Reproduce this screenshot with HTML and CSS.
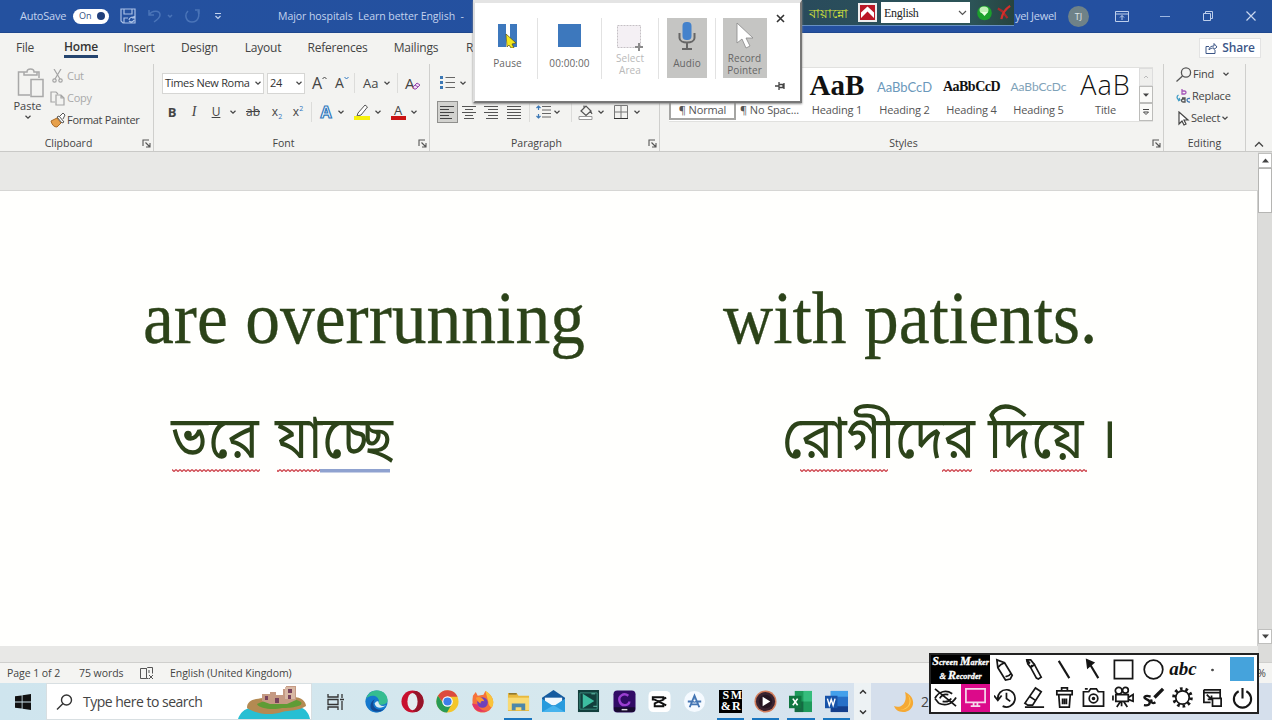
FILE: index.html
```html
<!DOCTYPE html>
<html lang="en">
<head>
<meta charset="utf-8">
<title>Major hospitals Learn better English - Word</title>
<link rel="stylesheet" href="styles.css">
</head>
<body>
<svg class="defs" width="0" height="0">
  <defs>
    <symbol id="chev" viewBox="0 0 8 8"><path d="M1.5 2.8 4 5.2 6.500 2.800" fill="none" stroke="#444" stroke-width="1.200"/></symbol>
    <symbol id="launch" viewBox="0 0 9 9"><path d="M1 7V1h6M3.500 3.500 7.500 7.500M8 4v4H4" fill="none" stroke="#555" stroke-width="1.100"/></symbol>
    <pattern id="zig" width="4" height="3" patternUnits="userSpaceOnUse"><path d="M0 .5 2 2.500 4 .5" fill="none" stroke="#cf4a52" stroke-width="1.300"/></pattern>
  </defs>
</svg>
<div class="app">
  <header class="titlebar">
    <span class="autosave">AutoSave</span>
    <span class="toggle"><span>On</span><i></i></span>
    <svg class="qa save" width="16" height="16" viewBox="0 0 16 16" fill="none" stroke="#a9c0e6" stroke-width="1.200"><path d="M1 1h14v14H3L1 13zM4 1v5h8V1M4 15v-5h4M9 12a3 3 0 0 1 5-2M14 8v2h-2M14 12a3 3 0 0 1-5 1"/></svg>
    <svg class="qa undo" width="26" height="16" viewBox="0 0 26 16" fill="none" stroke="#4a74b8" stroke-width="1.500"><path d="M1 2v5h5M1 7c3-5 11-5 11 0 0 3-3 5-6 7M20 7l2 2 2-2"/></svg>
    <svg class="qa redo" width="16" height="16" viewBox="0 0 16 16" fill="none" stroke="#4a74b8" stroke-width="1.500"><path d="M11 2h4v4M14 3c2 5 0 11-6 11S0 7 4 3"/></svg>
    <svg class="qa more" width="8" height="8" viewBox="0 0 8 8" fill="none" stroke="#c3d3ee" stroke-width="1.200"><path d="M1 1.500h6M1.500 4 4 6.500 6.500 4"/></svg>
    <span class="doc-name">Major hospitals&nbsp; Learn better English&nbsp; -</span>
    <span class="user">yel Jewel</span>
    <span class="avatar">TJ</span>
    <svg class="win w1" width="14" height="11" viewBox="0 0 14 11" fill="none" stroke="#bdceeb"><path d="M.5.5h13v10H.5zM.5 3h13M7 9V4.500M5 6.500l2-2 2 2"/></svg>
    <svg class="win w2" width="10" height="10" viewBox="0 0 10 10" stroke="#9db6e0"><path d="M0 5.500h10"/></svg>
    <svg class="win w3" width="10" height="10" viewBox="0 0 10 10" fill="none" stroke="#bdceeb"><path d="M.5 2.500h7v7h-7zM2.500 2.500v-2h7v7h-2"/></svg>
    <svg class="win w4" width="10" height="10" viewBox="0 0 10 10" stroke="#c9d7ef" stroke-width="1.200"><path d="m.5.5 9 9m0-9-9 9"/></svg>
  </header>

  <nav class="tabs">
    <span>File</span><span class="active">Home</span><span>Insert</span><span>Design</span><span>Layout</span><span>References</span><span>Mailings</span><span>Review</span>
    <span class="share"><svg width="13" height="12" viewBox="0 0 13 12" fill="none" stroke="#3c5687"><path d="M4 4.500H1v7h9V8M4 8c0-3 2-4 5-4V1.500L12 5 9 7.500V6C7 6 5 6.500 4 8z"/></svg>Share</span>
  </nav>

  <section class="ribbon">
    <div class="group clipboard">
      <div class="body">
        <div class="paste">
          <svg width="28" height="30" viewBox="0 0 28 30" fill="none" stroke="#a8a8a8" stroke-width="1.500"><path d="M7 4H1.500v23H13M19 4h3v6M7 7V4h3c0-4 7-4 7 0h3v3zM14 11.500h12v17H14z"/></svg>
          <span>Paste</span>
          <svg width="8" height="8"><use href="#chev"/></svg>
        </div>
        <div class="clip-list">
          <div class="dim"><svg width="16" height="14" viewBox="0 0 16 14" fill="none" stroke="#a5a5a5" stroke-width="1.200"><path d="m4 0 6 10M11 0 5 10"/><circle cx="4.500" cy="11.500" r="1.700"/><circle cx="10.500" cy="11.500" r="1.700"/></svg>Cut</div>
          <div class="dim"><svg width="16" height="15" viewBox="0 0 16 15" fill="none" stroke="#a5a5a5" stroke-width="1.200"><path d="M5 11H1V1h5l2 2M6 4h5l3 3v7H6zM11 4v3h3"/></svg>Copy</div>
          <div><svg width="16" height="15" viewBox="0 0 16 15"><path d="M1 8 7 5l4 5-4 4c-3 0-5-2-6-6z" fill="#e7a04a" stroke="#a96b28"/><path d="m7 4 2-1 5 6-2 1zM10 3l3-3 2 2-2 4" fill="#fff" stroke="#555"/></svg>Format Painter</div>
        </div>
      </div>
      <div class="caption"><span>Clipboard</span><svg width="9" height="9"><use href="#launch"/></svg></div>
    </div>

    <div class="group font">
      <div class="frow1">
        <span class="combo">Times New Roma<svg width="8" height="8"><use href="#chev"/></svg></span>
        <span class="combo">24<svg width="8" height="8"><use href="#chev"/></svg></span>
        <span class="grow">A<svg width="5" height="4" viewBox="0 0 5 4" fill="none" stroke="#444"><path d="M.5 3 2.500 1l2 2"/></svg></span>
        <span class="grow small">A<svg width="5" height="4" viewBox="0 0 5 4" fill="none" stroke="#2f76c0"><path d="M.5 1l2 2 2-2"/></svg></span>
        <i class="sep"></i>
        <span class="aa">Aa<svg width="8" height="8"><use href="#chev"/></svg></span>
        <i class="sep"></i>
        <span class="clear">A<svg width="9" height="8" viewBox="0 0 9 8" fill="#f1def5" stroke="#9647ad"><path d="m1 5 4-4 3 2-4 4H2zM3 3l3 2"/></svg></span>
      </div>
      <div class="frow2">
        <b>B</b><em>I</em><u>U</u><svg width="8" height="8"><use href="#chev"/></svg><s>ab</s><span>x<sub>2</sub></span><span>x<sup>2</sup></span><i class="sep"></i>
        <span class="fx">A</span><svg width="8" height="8"><use href="#chev"/></svg>
        <svg width="16" height="16" viewBox="0 0 16 16"><path d="m4 9 7-8 2.500 2L7 11l-4 1z" fill="#fff" stroke="#555"/><path d="M0 12h16v4H0z" fill="#f7f10d"/></svg><svg width="8" height="8"><use href="#chev"/></svg>
        <span class="color">A</span><svg width="8" height="8"><use href="#chev"/></svg>
      </div>
      <div class="caption"><span>Font</span><svg width="9" height="9"><use href="#launch"/></svg></div>
    </div>

    <div class="group para">
      <div class="prow1">
        <svg width="15" height="15" viewBox="0 0 15 15"><path d="M0 1h3v3H0zM0 6h3v3H0zM0 11h3v3H0z" fill="#3c78b5"/><path d="M5.500 2.500H15M5.500 7.500H15M5.500 12.500H15" stroke="#666" stroke-width="1.200"/></svg>
        <svg width="8" height="8"><use href="#chev"/></svg>
      </div>
      <div class="prow2">
        <span class="pressed"><svg width="14" height="13" viewBox="0 0 14 13" stroke="#444"><path d="M0 .5h14M0 3.500h9M0 6.500h14M0 9.500h9M0 12.500h12"/></svg></span>
        <svg width="14" height="13" viewBox="0 0 14 13" stroke="#555"><path d="M0 .5h14M3 3.500h8M0 6.500h14M3 9.500h8M2 12.500h10"/></svg>
        <svg width="14" height="13" viewBox="0 0 14 13" stroke="#555"><path d="M0 .5h14M4 3.500h10M0 6.500h14M4 9.500h10M2 12.500h12"/></svg>
        <svg width="14" height="13" viewBox="0 0 14 13" stroke="#555"><path d="M0 .5h14M0 3.500h14M0 6.500h14M0 9.500h14M0 12.500h14"/></svg>
        <i class="sep"></i>
        <svg width="15" height="14" viewBox="0 0 15 14" fill="none"><path d="M2.500 1v4M2.500 9v4M.5 3l2-2 2 2M.5 11l2 2 2-2" stroke="#3c78b5" stroke-width="1.200"/><path d="M6 1.500h9M6 5h9M6 8.500h9M6 12h9" stroke="#666"/></svg>
        <svg width="8" height="8"><use href="#chev"/></svg>
        <i class="sep"></i>
        <svg width="16" height="16" viewBox="0 0 16 16" fill="none" stroke="#555"><path d="m3 7 5-5 5 5-5 4.500zM6 4V1.500M12 6l2 4" stroke-width="1.200"/><path d="M1 12.500h13v3H1z" fill="#fff" stroke="#999"/></svg>
        <svg width="8" height="8"><use href="#chev"/></svg>
        <svg width="14" height="14" viewBox="0 0 14 14" fill="none" stroke="#777"><path d="M.5.5h13v13H.5zM7 .5v13M.5 7h13"/><path d="M0 13.500h14" stroke="#333"/></svg>
        <svg width="8" height="8"><use href="#chev"/></svg>
      </div>
      <div class="caption"><span>Paragraph</span><svg width="9" height="9"><use href="#launch"/></svg></div>
    </div>

    <div class="group styles">
      <div class="gallery">
        <div class="style chosen"><span class="sample"></span><span class="name">¶ Normal</span></div>
        <div class="style"><span class="sample"></span><span class="name">¶ No Spac...</span></div>
        <div class="style"><span class="sample h1">AaB</span><span class="name">Heading 1</span></div>
        <div class="style"><span class="sample h2">AaBbCcD</span><span class="name">Heading 2</span></div>
        <div class="style"><span class="sample h4">AaBbCcD</span><span class="name">Heading 4</span></div>
        <div class="style"><span class="sample h5">AaBbCcDc</span><span class="name">Heading 5</span></div>
        <div class="style"><span class="sample title">AaB</span><span class="name">Title</span></div>
        <div class="spin">
          <span class="off"><svg width="8" height="8" viewBox="0 0 8 8" fill="none" stroke="#bbb"><path d="m2 5 2-2 2 2"/></svg></span>
          <span><svg width="8" height="8" viewBox="0 0 8 8"><path d="M1 2.500h6L4 5.800z" fill="#444"/></svg></span>
          <span><svg width="8" height="8" viewBox="0 0 8 8" fill="none" stroke="#444"><path d="M1 1.500h6M1.500 4h5L4 6.500z"/></svg></span>
        </div>
      </div>
      <div class="caption"><span>Styles</span><svg width="9" height="9"><use href="#launch"/></svg></div>
    </div>

    <div class="group editing">
      <div class="edit-list">
        <div><svg width="16" height="15" viewBox="0 0 16 15" fill="none" stroke="#555" stroke-width="1.300"><circle cx="10" cy="5.500" r="4.600"/><path d="m6.500 9-6 5.500"/></svg>Find<svg class="c2" width="8" height="8"><use href="#chev"/></svg></div>
        <div><svg width="15" height="15" viewBox="0 0 15 15"><g fill="none" stroke-width="1.300"><path d="M6 0v5h2.500c2 0 2-3 0-3H6" stroke="#a656b8"/><path d="M2.500 6C.5 7 .5 10 3 11M2 12l2-1-1-2" stroke="#3c9ac4"/><path d="M9 10H7c-2 0-2 3 0 3h2V9H6" stroke="#555"/><path d="M14 9.500c-4-1-4 4 0 3.500" stroke="#3c78b5"/></g></svg>Replace</div>
        <div><svg width="14" height="15" viewBox="0 0 14 15" fill="#fff" stroke="#444" stroke-width="1.200"><path d="M3 1v12l3-3 2 4 2-1-2-4h4z"/></svg>Select<svg width="8" height="8"><use href="#chev"/></svg></div>
      </div>
      <div class="caption"><span>Editing</span></div>
    </div>
    <div class="collapse"><svg width="10" height="7" viewBox="0 0 10 7" fill="none" stroke="#444" stroke-width="1.300"><path d="m1 5.500 4-4 4 4"/></svg></div>
  </section>

  <main class="workspace">
    <div class="canvas">
      <article class="page">
        <div class="line en"><span>are overrunning</span><span>with patients.</span></div>
        <div class="line bn" lang="bn"><span class="b1">ভরে</span><span class="b2">যাচ্ছে</span><span class="b3">রোগীদের</span><span class="b4">দিয়ে ।</span></div>
        <svg class="marks" width="1257" height="4"><g fill="url(#zig)"><path d="M172 0h88v3h-88zM277 0h43v3h-43zM800 0h88v3h-88zM942 0h30v3h-30zM990 0h97v3h-97z"/></g><path d="M320 0h70v3.500h-70z" fill="#8fa2cf"/></svg>
      </article>
    </div>
    <div class="scrollbar">
      <span class="sb-btn"><svg width="7" height="5" viewBox="0 0 7 5"><path d="M0 4.500h7L3.500.5z" fill="#444"/></svg></span>
      <span class="thumb"></span>
      <span class="sb-btn down"><svg width="7" height="5" viewBox="0 0 7 5"><path d="M0 .5h7L3.500 4.500z" fill="#444"/></svg></span>
    </div>
  </main>

  <footer class="status">
    <span class="s1">Page 1 of 2</span><span class="s2">75 words</span>
    <svg width="14" height="13" viewBox="0 0 14 13" fill="none" stroke="#555"><path d="M6.500 1.500v10H.5v-10h6l1-1h5v6M6.500 11.500h2M9 8l4 4M13 8l-4 4M9 3v3"/></svg>
    <span class="s3">English (United Kingdom)</span>
    <span class="pct">%</span>
  </footer>

  <div class="taskbar">
    <div class="start"><svg width="16" height="16" viewBox="0 0 16 16" fill="#111"><path d="m0 2.300 6.700-.9v6.200H0zM7.500 1.300 16 0v7.600H7.500zM0 8.400h6.700v6.200L0 13.700zM7.500 8.400H16V16l-8.500-1.300z"/></svg></div>
    <div class="search">
      <svg width="17" height="16" viewBox="0 0 17 16" fill="none" stroke="#333" stroke-width="1.400"><circle cx="10.500" cy="6" r="5"/><path d="m7 9.500-6 6"/></svg>
      <span>Type here to search</span>
      <svg class="isle" width="74" height="34" viewBox="0 0 74 34"><path d="M1 34c2-6 6-10 14-12 16-4 36-3 48 0 6 2 9 7 10 12z" fill="#27bfd3"/><path d="M10 23c0-8 8-9 16-10l30-1c9 0 13 5 13 9-7 5-16 4-24 6-12 4-26 2-35-4z" fill="#b48a52"/><path d="M20 19c8-5 36-8 44-2 3 4-8 6-19 6-8 2-23 1-25-4z" fill="#5f9c35"/><path d="M25 9h8V7h6v3h7V4h3V1h10v14l-9 4H33l-8-3z" fill="#c59a83"/><path d="M48 2h10v12H48z" fill="#d8b8a4"/><path d="M51 4h4v4h-4zM28 11h3v4h-3zM38 13h4v5h-4zM51 10h3v4h-3z" fill="#78435c"/></svg>
    </div>
    <div class="view"><svg width="17" height="16" viewBox="0 0 17 16" fill="none" stroke="#333" stroke-width="1.300"><path d="M1 0v3h10V0M1 5.500h10v5H1zM1 16v-3h10v3M15 0v4M15 7v9M13 5.500h4"/></svg></div>
    <div class="apps">
      <span><svg viewBox="0 0 24 24"><circle cx="12" cy="12" r="11.500" fill="#1679c9"/><path d="M1 11C2 3 8 0 13 .5c7 0 11 6 10.500 11-1 4-6 5-10 3 3-4-1-8-5-7C5 7.500 2 9 1 11z" fill="#35bd90"/><path d="M1 10c3-6 14-5 13 2-2 2-1 5 2 6 3 0 5-1 6-1-2 5-8 7-12 6C3 21 0 15 1 10z" fill="#1579ce"/><path d="M10 10c-4 6 1 13 10 10-5 4-12 3-14-1-1-4 1-8 4-9z" fill="#124a94"/><path d="M10 14c1-1 2-3 4-2 0 4 4 6 8 4-5 4-11 3-12-2z" fill="#d9edf3"/></svg></span>
      <span><svg viewBox="0 0 24 24"><circle cx="12" cy="12" r="11.500" fill="#c8102e"/><path d="M16 1c10 4 10 18 0 22-4 0-6-5-6-11s2-11 6-11z" fill="#96152a"/><ellipse cx="12" cy="12" rx="5.300" ry="9" fill="#e4edf0"/></svg></span>
      <span><svg viewBox="0 0 24 24"><circle cx="12" cy="12" r="11.500" fill="#f4c62b"/><path d="M2 6a11.500 11.500 0 0 1 20.500 1H12L8 14z" fill="#dc4b3e"/><path d="M2 6a11.500 11.500 0 0 0 9.500 17.500l5-9H8z" fill="#279b55"/><circle cx="12" cy="12" r="5.500" fill="#fff"/><circle cx="12" cy="12" r="4.300" fill="#3d7ee8"/></svg></span>
      <span><svg viewBox="0 0 24 24"><path d="M2 6l3-4 2 4 6-1 2-4c5 3 9 8 8 13-2 13-20 12-21 1-1-4 0-7 0-9z" fill="#f5713b"/><path d="M15 1c8 4 10 12 7 17-2 0-4-2-4-6z" fill="#f9c33a"/><path d="M1 14c2 8 10 11 18 7-8 2-10-2-12-6z" fill="#e33668"/><circle cx="12" cy="13" r="5.500" fill="#7141ba"/><path d="M5 8c5-2 8 1 9 4-3-1-4 0-4 2-2-1-4-3-5-6z" fill="#fa9a31"/></svg></span>
      <span class="on"><svg viewBox="0 0 24 24"><path d="M1 3h9l2 3h11v16H1z" fill="#e8b93e"/><path d="M1 8h22v13H1z" fill="#f8da74"/><path d="M5 21v-7h14v7h-4v-3H9v3z" fill="#4c87aa"/><path d="M2 4h8" stroke="#85712e" stroke-width="1.500"/></svg></span>
      <span><svg viewBox="0 0 24 24"><path d="M0 8 12 0l12 8v15H0z" fill="#155b9f"/><path d="M3 8h18v8H3z" fill="#f1f8fd"/><path d="m0 9 12 8 12-8v14H0z" fill="#279bdd"/><path d="M0 23 12 16l12 7z" fill="#46b3ed"/></svg></span>
      <span><svg viewBox="0 0 24 24"><path d="M1 0h22v23H1z" fill="#123e3c"/><path d="M3 3h18v17H3z" fill="none" stroke="#3c8f80"/><path d="m6 4 12 7.500L6 19z" fill="#3dbda0"/><path d="M15 4h4M17 17h4" stroke="#65c8b2"/></svg></span>
      <span><svg viewBox="0 0 24 24"><rect x=".5" y=".5" width="23" height="23" rx="4" fill="#310b65"/><path d="M16 6c-5-4-11 1-9 6 2 6 10 4 10 0" fill="none" stroke="#9b3ed1" stroke-width="2.500"/><path d="M1 18h22v3q-1 2-3 2H4q-3 0-3-5z" fill="#180a30"/><path d="M9 20.500h6" stroke="#ddd" stroke-width="1.500"/></svg></span>
      <span><svg viewBox="0 0 24 24"><rect x=".5" y="1" width="23" height="22" rx="5" fill="#fff"/><path d="M5 7.500h11v2.500l-9 4v3h9v-2.500l-9-4.500H5zM15 10l4-2M15 14l4 2" fill="none" stroke="#111" stroke-width="2"/></svg></span>
      <span><svg viewBox="0 0 24 24"><circle cx="12" cy="12" r="11" fill="#f5faff"/><path d="m7 18 5-12 5 12M5 12h14M9 15h6" fill="none" stroke="#4475b3" stroke-width="2"/><circle cx="12" cy="11" r="1.500" fill="#fff" stroke="#4475b3"/></svg></span>
      <span class="on"><i class="smr"><b>S</b><b>M</b><b>&amp;</b><b>R</b></i></span>
      <span class="on"><svg viewBox="0 0 24 24"><circle cx="12" cy="12" r="11.500" fill="#d37c5a"/><circle cx="12" cy="12" r="10" fill="#3a2330"/><circle cx="12" cy="12" r="7" fill="#261622"/><path d="m9 7 8 5-8 5z" fill="#fff"/></svg></span>
      <span class="on"><svg viewBox="0 0 24 24"><path d="M6 1h18v22H6z" fill="#1f9b5c"/><path d="M15 1h9v11h-9z" fill="#36bd7d"/><path d="M6 12h9v11H6z" fill="#156a43"/><path d="M0 6h13v13H0z" fill="#107640"/><path d="m4 9 5 7m0-7-5 7" stroke="#fff" stroke-width="1.700"/></svg></span>
      <span class="on"><svg viewBox="0 0 24 24"><path d="M6 1h18v22H6z" fill="#2770c8"/><path d="M6 1h18v6H6z" fill="#43a0eb"/><path d="M6 17h18v6H6z" fill="#143f8d"/><path d="M0 6h13v13H0z" fill="#1853a8"/><path d="m2.500 9 2 7 2-6 2 6 2-7" fill="none" stroke="#fff" stroke-width="1.500"/></svg></span>
    </div>
    <div class="overflow"><svg width="8" height="28" viewBox="0 0 8 28" fill="none" stroke="#333" stroke-width="1.500"><path d="M1 5.500l3-3 3 3M1 22.500l3 3 3-3"/></svg></div>
    <div class="tray"><svg width="22" height="22" viewBox="0 0 22 22"><path d="M12 1c13 6 9 20-2 20-5 0-8-3-9-6 7 3 14-3 11-14z" fill="#f5a934"/><path d="M15 4c6 7 1 15-8 15 8-1 12-7 8-15z" fill="#ffd05c"/></svg><span>2</span></div>
  </div>
</div>

<div class="avro">
  <span class="brand" lang="bn">বায়ান্নো</span>
  <svg width="19" height="19" viewBox="0 0 19 19"><path d="M0 0h19v19H0z" fill="#eee"/><path d="M2 2h15v15H2z" fill="#bb1726"/><path d="m3 9.500 6.500-6 6.500 6v5.500l-6.500-6.500L3 15z" fill="#fff"/></svg>
  <span class="lang">English<svg width="9" height="9" viewBox="0 0 9 9" fill="none" stroke="#555" stroke-width="1.200"><path d="m1 3 3.500 3.500L8 3"/></svg></span>
  <svg class="orb" width="15" height="16" viewBox="0 0 15 16"><circle cx="7.500" cy="8" r="7.300" fill="#1ba02c"/><ellipse cx="7" cy="5" rx="4.500" ry="3.500" fill="#bff0b5"/><path d="M4 7h7L7.500 11z" fill="#e7ffe0"/></svg>
  <svg width="14" height="15" viewBox="0 0 16 17"><path d="m1 4 5 3 6 8" fill="none" stroke="#a92a2a" stroke-width="2.500"/><path d="M15 1C9 5 6 10 5 16" fill="none" stroke="#d52f2b" stroke-width="2.500"/></svg>
</div>

<div class="recorder">
  <div class="rec-btn"><svg width="22" height="24" viewBox="0 0 22 24"><path d="M1 0h8v23H1zM13 0h7v23h-7z" fill="#3d78bd"/><path d="m9 10 10 9-4 1 2 4-3 0-2-3-2 2z" fill="#f2e71e" stroke="#554c16" stroke-width=".7"/></svg><span>Pause</span></div>
  <i></i>
  <div class="rec-btn"><svg width="24" height="24"><path d="M0 0h23v23H0z" fill="#3d78bd"/></svg><span>00:00:00</span></div>
  <i></i>
  <div class="rec-btn off"><svg width="28" height="28" viewBox="0 0 28 28"><path d="M1.500 1.500h23v22h-23z" fill="#f4f0f4" stroke="#c5c0c5" stroke-dasharray="2 1"/><path d="M23 19v8M19 23h8" stroke="#8b8b8b" stroke-width="2"/></svg><span>Select<br>Area</span></div>
  <i></i>
  <div class="rec-btn pressed2"><svg width="18" height="30" viewBox="0 0 18 30"><rect x="4.500" y="0" width="9" height="18" rx="4" fill="#4482cc"/><path d="M1.500 11v5c0 6 15 6 15 0v-5M9 20v6M4 27h10" fill="none" stroke="#666" stroke-width="2"/></svg><span>Audio</span></div>
  <i></i>
  <div class="rec-btn pressed2 ptr"><svg width="20" height="27" viewBox="0 0 20 27"><path d="M2 1v20l5-4 4 9 4-2-4-8h7z" fill="#fff" stroke="#888" stroke-width=".8"/></svg><span>Record<br>Pointer</span></div>
  <div class="rec-side"><svg width="9" height="9" viewBox="0 0 9 9" stroke="#333" stroke-width="1.600"><path d="m1 1 7 7m0-7-7 7"/></svg><svg width="10" height="8" viewBox="0 0 10 8" fill="none" stroke="#444" stroke-width="1.300"><path d="M0 4h4M4 0v8M4 2.500h4v3H4M9 1v6"/></svg></div>
</div>

<div class="marker">
  <div class="logo"><span>Screen <em>M</em>arker</span><span>&amp; <em>R</em>ecorder</span></div>
  <span><svg viewBox="0 0 24 24"><path d="m3 2 8 3 8 13-2 4-5 1L4 10zM4 10l3-3 4-2M12 19q3 1 6-3"/></svg></span>
  <span><svg viewBox="0 0 24 24"><path d="m9 8 3-1 7 13-3 2-2-1L8 10zM4 2l4 0 4 5-4 3-3-4z"/><path d="m4 2 3 4" stroke-width="2.500"/></svg></span>
  <span><svg viewBox="0 0 24 24"><path d="m6 3 11 18" stroke-width="2.200"/></svg></span>
  <span><svg viewBox="0 0 24 24"><path d="m8 6 9 15" stroke-width="2.200"/><path d="m5 2 7 3-6 5z" fill="#111"/></svg></span>
  <span><svg viewBox="0 0 24 24"><path d="M2.500 2.500h19v19h-19z"/></svg></span>
  <span><svg viewBox="0 0 24 24"><circle cx="12" cy="12" r="9.700"/></svg></span>
  <span class="abc">abc</span>
  <span><svg viewBox="0 0 24 24"><circle cx="12" cy="12.500" r=".4" fill="#111"/></svg></span>
  <span class="swatch"><i></i></span>
  <span><svg viewBox="0 0 24 24"><path d="M1 3l22 18M1 13c4-8 12-9 18-5M23 12c-4 7-11 9-18 6M1 13l4 5M6 13c2-4 5-5 9-4M18 13c-2 3-5 4-9 3"/></svg></span>
  <span class="pink"><svg viewBox="0 0 24 24"><path d="M2 3h20v14H2zM10 17v4M14 17v4M7 21h10" stroke="#f5d9eb"/></svg></span>
  <span><svg viewBox="0 0 24 24"><path d="M4 14A9 9 0 1 1 9 21M0 10l4 5 4-5M13 7v6l4 3"/></svg></span>
  <span><svg viewBox="0 0 24 24"><path d="m4 15 9-13 6 4-9 14H5l-3-2zM7 11l6 4M2 22h20"/></svg></span>
  <span><svg viewBox="0 0 24 24"><path d="M4 5h16v4H4zM9 5V2h6v3M6 9l1 13h10l1-13M10 13v6M12 13v6M14 13v6"/></svg></span>
  <span><svg viewBox="0 0 24 24"><path d="M1.500 6H7l2-3h6l2 3h5.500v15h-21zM3 3h3"/><circle cx="12" cy="13" r="4.500"/><circle cx="12" cy="13" r="1"/></svg></span>
  <span><svg viewBox="0 0 24 24"><circle cx="7" cy="5" r="3.500"/><circle cx="14" cy="4.500" r="3"/><path d="M4 9h13v7H4zM1 10v5M17 12l5-3v7l-5-2M9 16l-4 6M12 16l4 6M10 16v5"/></svg></span>
  <span><svg viewBox="0 0 24 24"><path d="M9 11c-6-2-9 1-4 3s4 7-3 6M10 14c-1 3 1 5 4 3" stroke-width="2.400"/><path d="m13 12 9-9" stroke-width="3.500"/></svg></span>
  <span><svg viewBox="0 0 24 24"><circle cx="12" cy="12" r="7"/><circle cx="12" cy="12" r="9" stroke-width="3.500" stroke-dasharray="2.700 2.950"/></svg></span>
  <span><svg viewBox="0 0 24 24"><path d="M3 4h17v8M3 4v13h7M3 7h17M12 13h9v8h-9zM6 9l5 5M11 10v4H7"/></svg></span>
  <span><svg viewBox="0 0 24 24"><path d="M8 5.500a9 9 0 1 0 8 0M12 2v11" stroke-width="2.200"/></svg></span>
</div>
</body>
</html>
```
FILE: styles.css
```css
* { box-sizing: border-box; }
body { margin: 0; width: 1272px; height: 720px; overflow: hidden; position: relative; font: 11px/14px "Open Sans", "Noto Sans", sans-serif; color: #444; }
.defs { position: absolute; }
svg { display: block; flex: none; }
i { font-style: normal; }
.app { display: flex; flex-direction: column; height: 720px; }

.titlebar { height: 33px; background: linear-gradient(90deg, #24519f, #2450a0 90%, #24509a); display: flex; align-items: center; color: #c3d3ee; border-bottom: 1px solid #1e478e; white-space: nowrap; flex: none; }
.autosave { margin-left: 20px; width: 53px; letter-spacing: -.25px; }
.toggle { width: 36px; height: 15px; border-radius: 8px; background: #fff; color: #33507f; display: flex; align-items: center; justify-content: space-between; padding: 0 4px 0 6px; font-size: 9px; }
.toggle i { width: 8px; height: 8px; border-radius: 50%; background: #203f7b; }
.save { margin-left: 11px; }
.undo { margin-left: 12px; }
.redo { margin-left: 10px; }
.more { margin-left: 14px; }
.doc-name { margin-left: 56px; width: 737px; font-size: 10.500px; letter-spacing: -.05px; }
.user { width: 53px; letter-spacing: -.3px; }
.avatar { width: 21px; height: 21px; border-radius: 50%; background: #6f8288; color: #dfe6e8; font-size: 9px; line-height: 21px; text-align: center; }
.w1 { margin-left: 26px; }
.w2 { margin-left: 31px; }
.w3 { margin-left: 33px; }
.w4 { margin-left: 33px; }

.tabs { height: 29px; flex: none; background: #f3f3f1; display: grid; grid-template-columns: 50px 62px 54px 67px 60px 89px 68px 70px 1fr; align-items: center; font-size: 12px; white-space: nowrap; letter-spacing: -.2px; }
.tabs > span { justify-self: center; }
.tabs > .active { font-weight: 600; color: #333; border-bottom: 3px solid #24446f; height: 20px; line-height: 17px; align-self: end; margin-bottom: 4px; }
.tabs > .share { justify-self: end; margin-right: 11px; width: 62px; height: 20px; background: #fff; border: 1px solid #e3e3e3; color: #3c5687; font-weight: 600; display: flex; align-items: center; justify-content: center; gap: 4px; }

.ribbon { height: 90px; flex: none; background: #f3f3f1; border-bottom: 1px solid #c9c9c7; display: grid; grid-template-columns: 154px 276px 230px 504px 82px 26px; white-space: nowrap; }
.group { position: relative; display: flex; flex-direction: column; border-right: 1px solid #cfcfcd; margin: 2px 0 0; height: 87px; }
.caption { margin-top: auto; height: 16px; position: relative; text-align: center; font-size: 10.500px; line-height: 16px; padding-right: 16px; }
.caption svg { position: absolute; right: 2px; top: 4px; }
.sep { width: 1px; height: 20px; background: #dcdcda; }
.body { display: flex; margin-top: 1px; }
.paste { width: 50px; padding: 3px 0 0 5px; display: flex; flex-direction: column; align-items: center; }
.paste svg:first-child { margin-left: 6px; }
.paste span { margin-top: 1px; }
.clip-list { display: grid; grid-template-rows: 22px 22px 22px; align-items: center; }
.clip-list div { display: flex; align-items: center; gap: 1px; letter-spacing: -.3px; }
.dim { color: #a9a9a9; }

.frow1 { margin-top: 8px; height: 22px; display: grid; grid-template-columns: 102px 3px 38px 7px 16px 7px 15px 4px 3px 6px 28px 6px 2px 6px 18px; margin-left: 8px; align-items: center; }
.frow1 > :nth-child(1) { grid-column: 1; } .frow1 > :nth-child(2) { grid-column: 3; } .frow1 > :nth-child(3) { grid-column: 5; } .frow1 > :nth-child(4) { grid-column: 7; } .frow1 > :nth-child(5) { grid-column: 9; } .frow1 > :nth-child(6) { grid-column: 11; } .frow1 > :nth-child(7) { grid-column: 13; } .frow1 > :nth-child(8) { grid-column: 15; }
.combo { height: 21px; background: #fff; border: 1px solid #d6d6d4; display: flex; align-items: center; justify-content: space-between; padding: 0 1px 0 2px; letter-spacing: -.3px; color: #333; }
.grow { display: flex; font-size: 16px; line-height: 18px; }
.grow.small { font-size: 14px; }
.grow svg { margin-top: 2px; }
.aa { display: flex; align-items: center; font-size: 13px; justify-content: space-between; }
.clear { display: flex; font-size: 15px; align-items: flex-end; }
.clear svg { margin: 0 0 0 -3px; }
.frow2 { margin-top: 6px; height: 24px; display: grid; grid-template-columns: 4px 40px 4px 30px 10px 38px 4px 22px 8px 22px 20px 12px 28px 4px; margin-left: 16px; align-items: center; justify-items: center; font-size: 12px; }
.frow2 em { font-family: "Liberation Serif", serif; font-size: 14px; }
.frow2 sub, .frow2 sup { font-size: 7px; line-height: 0; color: #2f76c0; }
.frow2 b { font-size: 13px; }
.fx { color: #fff; font-size: 16px; font-weight: 700; -webkit-text-stroke: 1.200px #3179bd; }
.color { border-bottom: 4px solid #cb1414; width: 15px; height: 16px; line-height: 13px; text-align: center; font-size: 13px; }

.prow1 { height: 36px; padding: 1px 0 0 10px; display: flex; align-items: center; gap: 4px; }
.prow2 { height: 24px; display: grid; grid-template-columns: 22px 22px 22px 24px 6px 22px 6px 22px 8px 22px 18px 14px; align-items: center; justify-items: center; margin-left: 6px; }
.pressed { width: 21px; height: 22px; background: #d2d2cf; border: 1px solid #8f8f8d; display: grid; place-items: center; }

.gallery { margin: 3px 0 0 9px; height: 55px; width: 484px; background: #fff; display: grid; grid-template-columns: 67px 67px 68px 67px 67px 67px 67px 14px; border: 1px solid #e1e1df; border-left: 0; }
.style { display: flex; flex-direction: column; align-items: center; }
.chosen { border: 2px solid #a5a5a3; height: 53px; margin-top: -1px; }
.sample { height: 35px; line-height: 32px; color: #111; }
.name { font-size: 11px; line-height: 14px; letter-spacing: -.15px; color: #555; }
.style.chosen .name { margin-top: -1px; }
.h1 { font: 700 29px/34px "Liberation Serif", serif; }
.h2 { font-size: 13px; line-height: 38px; color: #6b98bb; font-family: Lato, sans-serif; }
.h4 { font: 700 14px/38px "Liberation Serif", serif; letter-spacing: -.5px; }
.h5 { font-size: 12px; line-height: 38px; color: #7fa2b8; font-family: Lato, sans-serif; letter-spacing: -.1px; }
.title { font: 300 27px/34px "Open Sans", sans-serif; height: 35px; letter-spacing: 1px; }
.spin { display: grid; grid-template-rows: 18px 17px 18px; }
.spin span { border: 1px solid #bcbcba; background: #fafaf8; display: grid; place-items: center; }
.spin .off { background: #efefed; border-color: #ddd; }
.edit-list { display: grid; grid-template-rows: 22px 22px 22px; padding-left: 12px; margin-top: -1px; }
.edit-list div { display: flex; align-items: center; gap: 1px; letter-spacing: -.2px; }
.edit-list .c2 { margin-left: 7px; }
.editing .caption { padding-right: 0; }
.collapse { display: flex; align-items: flex-end; justify-content: center; padding-bottom: 3px; }

.workspace { height: 510px; flex: none; background: #e8e8e6; display: grid; grid-template-columns: 1258px 14px; }
.canvas { padding: 38px 0 16px; }
.page { height: 456px; background: #fffffd; border-top: 1px solid #d6d6d4; border-right: 1px solid #d0d0ce; overflow: hidden; }
.line { white-space: nowrap; color: #2c4319; }
.en { margin: 89px 0 0 143px; height: 81px; display: grid; grid-template-columns: 580px 1fr; font: 69.500px/80px "Liberation Serif", serif; transform: scaleY(1.07); transform-origin: 0 63px; -webkit-text-stroke: .3px #2c4319; }
.bn { height: 106px; display: grid; grid-template-columns: 104px 507px 206px 1fr; margin-left: 171px; font: 53px/168px "Noto Sans Bengali", "Noto Serif Bengali", "Liberation Serif", serif; transform: scaleY(1.11); transform-origin: 0 98px; }
.marks { margin-top: 2px; }
.scrollbar { display: flex; flex-direction: column; background: #dcdcda; padding: 1px 0 18px; }
.sb-btn { height: 15px; background: #fff; border: 1px solid #bfbfbd; display: grid; place-items: center; }
.thumb { height: 45px; background: #fff; border: 1px solid #b5b5b3; }
.down { margin-top: auto; }

.status { height: 21px; flex: none; background: #f4f4f2; border-top: 1px solid #cfcfcd; display: grid; grid-template-columns: 72px 61px 30px 1fr auto; padding-left: 7px; align-items: center; font-size: 10.500px; letter-spacing: -.05px; white-space: nowrap; }
.pct { padding-right: 6px; }

.taskbar { height: 37px; flex: none; background: linear-gradient(90deg, #cfe5ee, #d6e8ee 45%, #d7e1ee 72%); display: grid; grid-template-columns: 46px 266px 47px 495px 17px 1fr; }
.start, .view { display: grid; place-items: center; }
.search { background: #fff; border: 1px solid #d8dfe2; display: flex; align-items: center; padding-left: 9px; }
.search span { margin-left: 10px; width: 157px; font-size: 14px; letter-spacing: -.5px; white-space: nowrap; }
.isle { align-self: flex-end; }
.apps { display: grid; grid-template-columns: repeat(14, 1fr); }
.apps > span { display: grid; place-items: center; border-bottom: 2px solid transparent; margin: 0 4px; padding-top: 1px; }
.apps > .on { border-color: #1a76c0; }
.apps svg { width: 23px; height: 23px; }
.smr { width: 23px; height: 23px; background: #000; color: #fff; display: grid; grid-template-columns: 1fr 1fr; padding: 0 2px; font: 12px/11px "Liberation Serif", serif; text-align: center; }
.overflow { background: #edf2f4; display: grid; place-items: center; }
.tray { background: #d5dfec; display: flex; align-items: center; gap: 6px; padding-left: 22px; font-size: 14px; }

.avro { position: absolute; left: 802px; top: 0; width: 212px; height: 26px; background: linear-gradient(90deg, #294b5c, #2c5457 80%, #27443f); border-bottom: 1px solid #6790c2; display: flex; align-items: center; color: #d6e23a; }
.brand { margin-left: 7px; width: 49px; font-size: 13px; line-height: 22px; white-space: nowrap; }
.lang { margin: 0 7px 0 4px; width: 89px; height: 21px; background: #fff; color: #222; font: 12px/20px "Liberation Serif", serif; display: flex; align-items: center; justify-content: space-between; padding: 0 3px; letter-spacing: -.3px; }
.orb { margin-right: 5px; }

.recorder { position: absolute; left: 473px; top: 0; width: 329px; height: 103px; background: #fff; border: 2px solid #777; border-top: 3px solid #e4e4e4; border-left: 2px solid #ddd; box-shadow: 0 1px 2px #888; display: grid; grid-template-columns: 62px 1px 63px 1px 56px 1px 56px 1px 57px 1fr; color: #666; font-size: 10px; line-height: 12px; white-space: nowrap; }
.recorder > i { background: #e2e2e2; height: 61px; margin-top: 15px; }
.rec-btn { display: flex; flex-direction: column; align-items: center; justify-self: center; height: 60px; margin-top: 15px; padding-top: 6px; letter-spacing: .1px; text-align: center; }
.rec-btn span { margin-top: 9px; }
.rec-btn:first-child { padding-left: 3px; }
.rec-btn.off { color: #b9b9b9; }
.rec-btn.off span { margin-top: 0; }
.pressed2 { background: #c5c5c3; width: 40px; padding-top: 4px; }
.pressed2 span { margin-top: 5px; }
.ptr { width: 44px; }
.ptr span { margin-top: 3px; }
.rec-side { display: flex; flex-direction: column; align-items: center; justify-content: space-between; margin-left: -13px; padding: 11px 0; }

.marker { position: absolute; left: 929px; top: 653px; width: 330px; height: 61px; background: #fff; border: 2px solid #222; display: grid; grid-template-columns: repeat(11, 1fr); grid-template-rows: 1fr 1fr; }
.marker > * { display: grid; place-items: center; }
.marker svg { width: 23px; height: 23px; fill: none; stroke: #161616; stroke-width: 1.800; }
.logo { grid-column: span 2; background: #000; color: #fff; font: italic 700 8.300px/12px "Liberation Serif", serif; align-content: center; white-space: nowrap; -webkit-text-stroke: .3px #fff; }
.logo span:first-child::first-letter, .logo em { font-size: 12px; }
.abc { font: italic 700 19px/22px "Liberation Serif", serif; color: #111; }
.swatch i { width: 24px; height: 24px; background: #45a3dc; }
.pink { background: #dc0a8a; }
```
